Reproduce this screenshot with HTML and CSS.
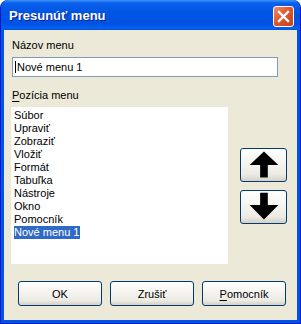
FILE: index.html
```html
<!DOCTYPE html>
<html>
<head>
    <title>Presunúť menu</title>
    <link rel="stylesheet" href="styles.css">
</head>
<body>
<div class="window">
    <div class="titlebar">
        <span class="title">Presunúť menu</span>
        <button class="close-btn" aria-label="Zavrieť">
            <svg width="13" height="13" viewBox="0 0 13 13"><path d="M2 2 L11 11 M11 2 L2 11" stroke="#fff" stroke-width="2.4" stroke-linecap="square"/></svg>
        </button>
    </div>

    <div class="client">
        <div class="field-label">Názov menu</div>
        <div class="textbox"><span class="caret"></span>Nové menu 1</div>

        <div class="field-label gap-top"><u>P</u>ozícia menu</div>
        <div class="list-row">
            <ul class="listbox">
                <li>Súbor</li>
                <li>Upraviť</li>
                <li>Zobraziť</li>
                <li>Vložiť</li>
                <li>Formát</li>
                <li>Tabuľka</li>
                <li>Nástroje</li>
                <li>Okno</li>
                <li>Pomocník</li>
                <li><span class="selected">Nové menu 1</span></li>
            </ul>
            <div class="move-buttons">
                <button class="arrow-btn" aria-label="Hore">
                    <svg width="47" height="34" viewBox="0 0 47 34"><path d="M24 3 L39 17 L28 17 L28 30 L20 30 L20 17 L9 17 Z" fill="#000"/></svg>
                </button>
                <button class="arrow-btn" aria-label="Dole">
                    <svg width="47" height="34" viewBox="0 0 47 34"><path d="M20 2 L28 2 L28 15 L39 15 L24 30 L9 15 L20 15 Z" fill="#000"/></svg>
                </button>
            </div>
        </div>

        <div class="dialog-buttons">
            <button class="btn">OK</button>
            <button class="btn">Zrušiť</button>
            <button class="btn"><u>P</u>omocník</button>
        </div>
    </div>
</div>
</body>
</html>
```

FILE: styles.css
```css
:root {
    --xp-blue: #0054e3;
    --xp-blue-dark: #0831d9;
    --face: #ece9d8;
    --select: #316ac5;
    --btn-border: #003c74;
    --input-border: #7f9db9;
}

html, body {
    margin: 0;
    padding: 0;
    background: #fff;
}

body {
    font-family: "Liberation Sans", Arial, sans-serif;
    font-size: 11px;
    color: #000;
}

.window {
    width: 301px;
    height: 324px;
    box-sizing: border-box;
    background: var(--xp-blue);
    border: 1px solid #0019cf;
    border-top: none;
    border-radius: 8px 8px 0 0;
    padding: 0 3px 3px 3px;
    display: flex;
    flex-direction: column;
}

.titlebar {
    height: 30px;
    margin: 0 -3px;
    padding: 0 6px 0 8px;
    border-radius: 8px 8px 0 0;
    background: linear-gradient(to bottom, #3d95ff 0px, #0a5fea 3px, #0055e5 12px, #0053e2 24px, #0461f0 28px, #0054e3 30px);
    display: flex;
    align-items: center;
    justify-content: space-between;
}

.title {
    color: #fff;
    font-weight: bold;
    font-size: 13px;
    text-shadow: 1px 1px 0 #0a1e8c;
    margin-top: 1px;
}

.close-btn {
    width: 21px;
    height: 21px;
    padding: 0;
    margin-top: 2px;
    border: 1px solid #fff;
    border-radius: 3px;
    background: linear-gradient(135deg, #f08d6d 0%, #e2572d 45%, #c4401c 100%);
    display: flex;
    align-items: center;
    justify-content: center;
}

.client {
    flex-grow: 1;
    background: var(--face);
    padding: 9px 10px 0 7px;
}

.field-label {
    line-height: 13px;
    height: 13px;
    margin-left: 1px;
}

.field-label.gap-top {
    margin-top: 12px;
}

.field-label u {
    text-decoration-thickness: 1px;
    text-underline-offset: 2px;
}

.textbox {
    width: 266px;
    height: 20px;
    box-sizing: border-box;
    margin: 5px 0 0 1px;
    border: 1px solid var(--input-border);
    background: #fff;
    line-height: 18px;
    padding-left: 2px;
    display: flex;
    align-items: center;
}

.caret {
    width: 1px;
    height: 12px;
    background: #000;
    margin-right: 1px;
}

.list-row {
    display: flex;
    align-items: center;
    margin-top: 5px;
}

.listbox {
    list-style: none;
    margin: 0;
    padding: 2px 3px;
    width: 217px;
    height: 157px;
    box-sizing: border-box;
    background: #fff;
}

.listbox li {
    line-height: 13px;
    height: 13px;
}

.selected {
    background: var(--select);
    color: #fff;
    display: inline-block;
    padding-right: 1px;
}

.move-buttons {
    display: flex;
    flex-direction: column;
    gap: 8px;
    margin-left: 12px;
}

.arrow-btn,
.btn {
    border: 1px solid var(--btn-border);
    border-radius: 3px;
    background: linear-gradient(to bottom, #ffffff 0%, #f6f5f0 40%, #ecebe4 80%, #d6d0c5 100%);
    padding: 0;
    font-family: inherit;
    font-size: 11px;
    color: #000;
}

.arrow-btn {
    width: 47px;
    height: 34px;
    display: flex;
    align-items: center;
    justify-content: center;
}

.arrow-btn svg {
    display: block;
}

.dialog-buttons {
    display: flex;
    gap: 8px;
    margin: 17px 0 0 7px;
}

.btn {
    width: 84px;
    height: 25px;
}

.btn u {
    text-underline-offset: 2px;
}
```
